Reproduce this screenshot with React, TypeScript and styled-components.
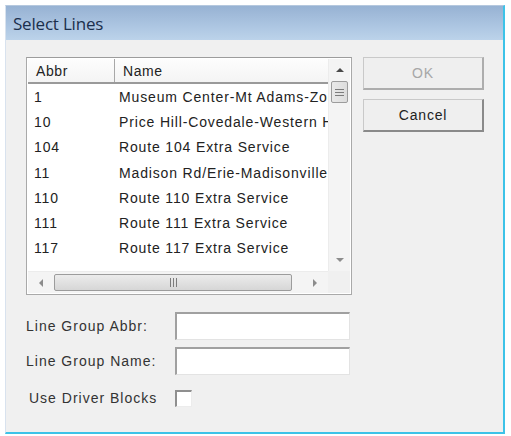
import React from 'react';
import styled, { createGlobalStyle } from 'styled-components';

const GlobalStyle = createGlobalStyle`
  html, body {
    margin: 0;
    padding: 0;
    background: #ffffff;
  }
`;

const Window = styled.div`
  margin: 5px 0 0 5px;
  width: 500px;
  height: 429px;
  box-sizing: border-box;
  display: flex;
  flex-direction: column;
  background: #f0f0f0;
  border-left: 1px solid #d8e2ee;
  border-top: 1px solid #b5c8de;
  border-right: 2px solid #3dc3e8;
  border-bottom: 2px solid #3dc3e8;
  font-family: 'Liberation Sans', Arial, sans-serif;
  color: #222222;
`;

const TitleBar = styled.div`
  height: 34px;
  flex-shrink: 0;
  display: flex;
  align-items: center;
  padding-left: 7px;
  background: linear-gradient(180deg, #97b2d3 0%, #adc6e2 60%, #bcd3ea 100%);
  font-family: 'Open Sans', 'Noto Sans', sans-serif;
  font-size: 17px;
  color: #1b2f4c;
  letter-spacing: -0.2px;
`;

const Body = styled.div`
  flex: 1;
  padding: 17px 0 0 20px;
  display: flex;
  flex-direction: column;
`;

const TopRow = styled.div`
  display: flex;
  gap: 11px;
`;

const ListBox = styled.div`
  width: 326px;
  height: 238px;
  box-sizing: border-box;
  border: 1px solid #a9a9a9;
  border-top-color: #9c9c9c;
  background: #ffffff;
  display: grid;
  grid-template-columns: 1fr 22px;
  grid-template-rows: 1fr 22px;
  padding: 1px;
`;

const ListMain = styled.div`
  overflow: hidden;
  display: flex;
  flex-direction: column;
`;

const Header = styled.div`
  height: 25px;
  flex-shrink: 0;
  display: flex;
  background: linear-gradient(180deg, #fdfdfd 0%, #f4f4f4 100%);
  border-bottom: 2px solid #9a9a9a;
  box-sizing: border-box;
`;

const HeaderCell = styled.div<{ $w?: number }>`
  width: ${p => (p.$w ? `${p.$w}px` : 'auto')};
  flex: ${p => (p.$w ? '0 0 auto' : '1')};
  box-sizing: border-box;
  padding-left: 8px;
  display: flex;
  align-items: center;
  font-size: 14px;
  letter-spacing: 0.6px;
  border-right: ${p => (p.$w ? '1px solid #a8a8a8' : 'none')};
`;

const Row = styled.div`
  height: 25.3px;
  display: flex;
  align-items: center;
  font-size: 14px;
  white-space: nowrap;
  letter-spacing: 0.85px;
`;

const Cell = styled.div<{ $w?: number }>`
  width: ${p => (p.$w ? `${p.$w}px` : 'auto')};
  flex-shrink: 0;
  padding-left: ${p => (p.$w ? '6px' : '4px')};
  box-sizing: border-box;
  overflow: hidden;
`;

const VScroll = styled.div`
  background: #f4f4f4;
  border-left: 1px solid #ececec;
  display: flex;
  flex-direction: column;
  align-items: center;
`;

const ArrowBtn = styled.div`
  height: 22px;
  width: 100%;
  display: flex;
  align-items: center;
  justify-content: center;
  flex-shrink: 0;
`;

const VThumb = styled.div`
  width: 17px;
  height: 22px;
  box-sizing: border-box;
  border: 1px solid #9c9c9c;
  border-radius: 2px;
  background: linear-gradient(90deg, #e9e9e9, #dcdcdc);
  display: flex;
  align-items: center;
  justify-content: center;
`;

const HScroll = styled.div`
  background: #f4f4f4;
  border-top: 1px solid #ececec;
  display: flex;
  align-items: center;
`;

const HThumb = styled.div`
  flex: 0 0 238px;
  height: 17px;
  box-sizing: border-box;
  border: 1px solid #9c9c9c;
  border-radius: 2px;
  background: linear-gradient(180deg, #ececec, #d6d6d6);
  display: flex;
  align-items: center;
  justify-content: center;
`;

const HArrow = styled.div`
  width: 26px;
  display: flex;
  align-items: center;
  justify-content: center;
`;

const Corner = styled.div`
  background: #f0f0f0;
`;

const Buttons = styled.div`
  display: flex;
  flex-direction: column;
  gap: 9px;
`;

const Button = styled.div<{ $disabled?: boolean }>`
  width: 121px;
  height: 33px;
  box-sizing: border-box;
  border: 1px solid #c9c9c9;
  border-right: 2px solid ${p => (p.$disabled ? '#adadad' : '#8a8a8a')};
  border-bottom: 2px solid ${p => (p.$disabled ? '#adadad' : '#8a8a8a')};
  background: #efefef;
  display: flex;
  align-items: center;
  justify-content: center;
  font-size: 14px;
  letter-spacing: 0.8px;
  color: ${p => (p.$disabled ? '#a7a7a7' : '#222222')};
`;

const Form = styled.div`
  margin-top: 17px;
  display: flex;
  flex-direction: column;
  gap: 7px;
`;

const FieldRow = styled.div<{ $shift?: number }>`
  display: flex;
  align-items: center;
  height: 28px;
  margin-top: ${p => p.$shift ?? 0}px;
`;

const Label = styled.div<{ $indent?: number }>`
  width: 149px;
  padding-left: ${p => p.$indent ?? 0}px;
  box-sizing: border-box;
  font-size: 14px;
  letter-spacing: 1px;
  white-space: nowrap;
  color: #333333;
`;

const TextBox = styled.div`
  width: 175px;
  height: 28px;
  box-sizing: border-box;
  background: #ffffff;
  border: 1px solid #e3e3e3;
  border-top: 2px solid #a0a0a0;
  border-left: 2px solid #a0a0a0;
`;

const CheckBox = styled.div`
  width: 17px;
  height: 17px;
  box-sizing: border-box;
  background: #ffffff;
  border: 1px solid #ececec;
  border-top: 2px solid #8f8f8f;
  border-left: 2px solid #8f8f8f;
`;

const lines = [
  { abbr: '1', name: 'Museum Center-Mt Adams-Zoo' },
  { abbr: '10', name: 'Price Hill-Covedale-Western Hills' },
  { abbr: '104', name: 'Route 104 Extra Service' },
  { abbr: '11', name: 'Madison Rd/Erie-Madisonville' },
  { abbr: '110', name: 'Route 110 Extra Service' },
  { abbr: '111', name: 'Route 111 Extra Service' },
  { abbr: '117', name: 'Route 117 Extra Service' },
];

const Tri = ({ dir }: { dir: 'up' | 'down' | 'left' | 'right' }) => {
  const pts = {
    up: '0,5 4,1 8,5',
    down: '0,1 4,5 8,1',
    left: '5,0 1,4 5,8',
    right: '1,0 5,4 1,8',
  }[dir];
  const vertical = dir === 'up' || dir === 'down';
  return (
    <svg width={vertical ? 8 : 6} height={vertical ? 6 : 8} viewBox={vertical ? '0 0 8 6' : '0 0 6 8'}>
      <polygon points={pts} fill={dir === 'up' ? '#4a4a4a' : '#8c8c8c'} />
    </svg>
  );
};

const Grip = ({ vertical }: { vertical?: boolean }) =>
  vertical ? (
    <svg width="9" height="9" viewBox="0 0 9 9">
      <path d="M0 1.5h9M0 4.5h9M0 7.5h9" stroke="#7c7c7c" strokeWidth="1" />
    </svg>
  ) : (
    <svg width="9" height="9" viewBox="0 0 9 9">
      <path d="M1.5 0v9M4.5 0v9M7.5 0v9" stroke="#7c7c7c" strokeWidth="1" />
    </svg>
  );

export default function App() {
  return (
    <>
      <GlobalStyle />
      <Window>
        <TitleBar>Select Lines</TitleBar>
        <Body>
          <TopRow>
            <ListBox>
              <ListMain>
                <Header>
                  <HeaderCell $w={87}>Abbr</HeaderCell>
                  <HeaderCell>Name</HeaderCell>
                </Header>
                {lines.map(l => (
                  <Row key={l.abbr}>
                    <Cell $w={87}>{l.abbr}</Cell>
                    <Cell>{l.name}</Cell>
                  </Row>
                ))}
              </ListMain>
              <VScroll>
                <ArrowBtn>
                  <Tri dir="up" />
                </ArrowBtn>
                <VThumb>
                  <Grip vertical />
                </VThumb>
                <div style={{ flex: 1 }} />
                <ArrowBtn>
                  <Tri dir="down" />
                </ArrowBtn>
              </VScroll>
              <HScroll>
                <HArrow>
                  <Tri dir="left" />
                </HArrow>
                <HThumb>
                  <Grip />
                </HThumb>
                <div style={{ flex: 1 }} />
                <HArrow>
                  <Tri dir="right" />
                </HArrow>
              </HScroll>
              <Corner />
            </ListBox>
            <Buttons>
              <Button $disabled>OK</Button>
              <Button>Cancel</Button>
            </Buttons>
          </TopRow>
          <Form>
            <FieldRow>
              <Label>Line Group Abbr:</Label>
              <TextBox />
            </FieldRow>
            <FieldRow>
              <Label>Line Group Name:</Label>
              <TextBox />
            </FieldRow>
            <FieldRow $shift={2}>
              <Label $indent={3}>Use Driver Blocks</Label>
              <CheckBox />
            </FieldRow>
          </Form>
        </Body>
      </Window>
    </>
  );
}
